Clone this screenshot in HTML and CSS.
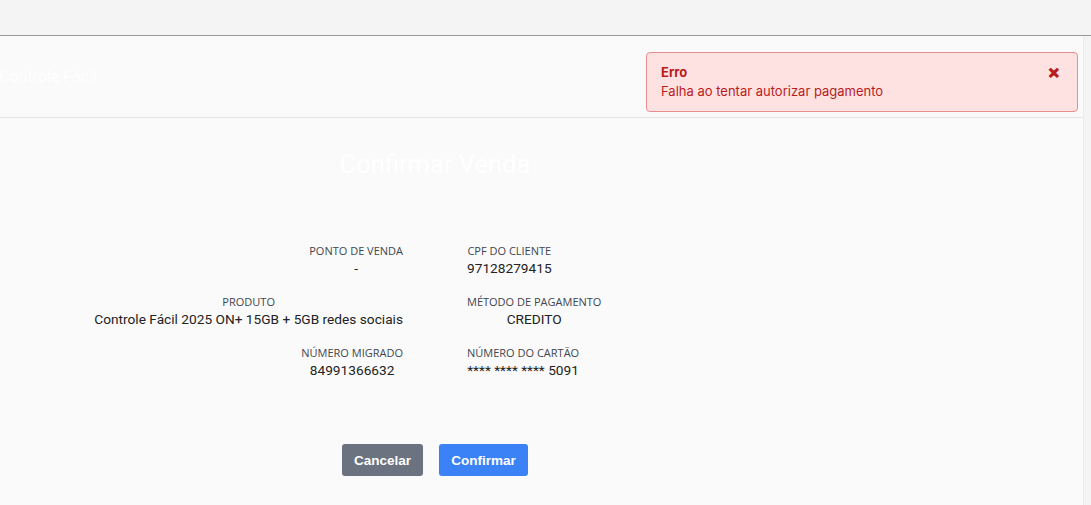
FILE: index.html
```html
<!DOCTYPE html>
<html lang="pt-BR">
<head>
	<meta charset="UTF-8" />
	<title>Confirmar Venda</title>
	<link rel="stylesheet" href="styles.css">
</head>
<body>
<div class="topbar"></div>
<div class="panel">
	<div class="panel-header">
		<span class="brand">Controle Fácil</span>
	</div>
	<div class="content">
		<h2 class="title">Confirmar Venda</h2>
		<div class="details">
			<div class="item left">
				<span class="label">Ponto de venda</span>
				<span class="value">-</span>
			</div>
			<div class="item right">
				<span class="label">CPF do cliente</span>
				<span class="value">97128279415</span>
			</div>
			<div class="item left">
				<span class="label">Produto</span>
				<span class="value">Controle Fácil 2025 ON+ 15GB + 5GB redes sociais</span>
			</div>
			<div class="item right">
				<span class="label">Método de pagamento</span>
				<span class="value">CREDITO</span>
			</div>
			<div class="item left">
				<span class="label">Número migrado</span>
				<span class="value">84991366632</span>
			</div>
			<div class="item right">
				<span class="label">Número do cartão</span>
				<span class="value">**** **** **** 5091</span>
			</div>
		</div>
		<div class="actions">
			<button class="btn btn-cancel">Cancelar</button>
			<button class="btn btn-confirm">Confirmar</button>
		</div>
	</div>
</div>

<div class="toast">
	<div class="toast-body">
		<strong>Erro</strong>
		<span>Falha ao tentar autorizar pagamento</span>
	</div>
	<button class="toast-close">&#x2715;</button>
</div>
</body>
</html>
```

FILE: styles.css
```css
* {
	padding: 0;
	margin: 0;
	box-sizing: border-box;
}
body {
	background: #f4f4f4;
	font-family: "Liberation Sans", Arial, sans-serif;
	width: 1091px;
	height: 505px;
	overflow: hidden;
}
.topbar {
	height: 36px;
	border-bottom: 1px solid #9a9a9a;
}
.panel {
	width: 1084px;
	height: 469px;
	background: #fafafa;
	border-right: 1px solid #ececec;
}
.panel-header {
	height: 82px;
	display: flex;
	align-items: center;
	border-bottom: 1px solid #e4e4e4;
}
.brand {
	color: #fff;
	font-family: Roboto, sans-serif;
	font-size: 16px;
	margin-left: -1px;
}
.content {
	width: 870px;
	display: flex;
	flex-direction: column;
	align-items: center;
}
.title {
	margin-top: 30px;
	color: #fff;
	font-family: Roboto, sans-serif;
	font-weight: 400;
	font-size: 25.5px;
	line-height: 32px;
}
.details {
	margin-top: 63px;
	width: 100%;
	display: grid;
	grid-template-columns: 1fr 1fr;
	column-gap: 64px;
	row-gap: 17px;
}
.item {
	display: flex;
	flex-direction: column;
	align-items: center;
	text-align: center;
}
.item.left {
	justify-self: end;
}
.item.right {
	justify-self: start;
}
.label {
	font-family: "Open Sans", "Noto Sans", sans-serif;
	font-size: 11px;
	line-height: 16px;
	text-transform: uppercase;
	color: #3f4650;
}
.value {
	font-family: Roboto, sans-serif;
	font-size: 13.7px;
	line-height: 18px;
	color: #222;
}
.actions {
	margin-top: 65px;
	display: flex;
	gap: 16px;
}
.btn {
	border: none;
	border-radius: 3px;
	height: 32px;
	color: #fff;
	font-family: "Liberation Sans", Arial, sans-serif;
	font-weight: 700;
	font-size: 13.5px;
}
.btn-cancel {
	width: 81px;
	background: #6b7280;
}
.btn-confirm {
	width: 89px;
	background: #3b82f6;
}
.toast {
	position: absolute;
	top: 52px;
	left: 646px;
	width: 432px;
	height: 60px;
	background: #fee2e2;
	border: 1px solid #e88d8d;
	border-radius: 4px;
	display: flex;
	justify-content: space-between;
	padding: 10px 17px 0 14px;
	font-family: Inter, sans-serif;
	color: #b91c1c;
}
.toast-body {
	display: flex;
	flex-direction: column;
	font-size: 13px;
	line-height: 19px;
}
.toast-body strong {
	font-weight: 700;
}
.toast-close {
	background: none;
	border: none;
	color: #b91c1c;
	font-size: 14px;
	font-weight: 900;
	height: 19px;
	-webkit-text-stroke: 1px #b91c1c;
}
```
